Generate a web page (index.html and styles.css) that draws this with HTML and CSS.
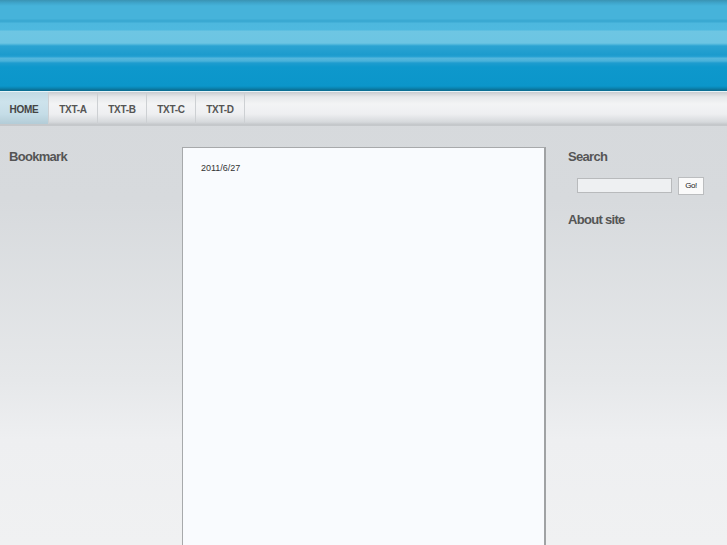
FILE: index.html
```html
<!DOCTYPE html>
<html>
<head>
<meta charset="utf-8">
<link rel="stylesheet" href="styles.css">
</head>
<body>
<div class="header"></div>
<div class="nav">
  <a class="tab active">HOME</a>
  <a class="tab">TXT-A</a>
  <a class="tab">TXT-B</a>
  <a class="tab">TXT-C</a>
  <a class="tab">TXT-D</a>
</div>
<div class="main">
  <div class="left">
    <h2 class="heading">Bookmark</h2>
  </div>
  <div class="content">
    <div class="date">2011/6/27</div>
  </div>
  <div class="right">
    <h2 class="heading">Search</h2>
    <div class="search">
      <input class="search-input" type="text">
      <button class="go">Go!</button>
    </div>
    <h2 class="heading about">About site</h2>
  </div>
</div>
</body>
</html>
```
FILE: styles.css
```css
html, body {
  margin: 0;
  padding: 0;
  height: 100%;
  overflow: hidden;
}
body {
  font-family: "Liberation Sans", Arial, sans-serif;
  background: linear-gradient(to bottom, #d5d8db 0px, #d7dadd 200px, #e6e8ea 380px, #eeeff1 440px, #f0f1f2 545px);
}
.header {
  height: 91px;
  background: linear-gradient(to bottom,
    #3a93b3 0px, #3fa6cc 3px, #46b3da 6px, #46b3da 19px,
    #3aa9d2 20px, #3aa9d2 22px, #4db8de 23px, #4fb9df 30px,
    #6ec6e3 31px, #6cc5e3 43px, #58bcde 44px, #2aa3d2 46px,
    #1c9bcd 55px, #2aa3d4 57px, #55b7dd 58px, #4ab2da 61px,
    #1e9ccf 63px, #0e98cc 67px, #0b96ca 86px, #0a86b4 88px, #0b6f94 90px);
  border-bottom: 1px solid #e8f4f8;
}
.nav {
  display: flex;
  height: 32px;
  background: linear-gradient(to bottom, #c9ccd0 0px, #e6e8ea 5px, #f3f4f5 12px, #eeeff1 22px, #d6d9dc 30px, #c8cbce 32px);
  border-bottom: 2px solid #c5c8cb;
}
.tab {
  display: flex;
  align-items: center;
  justify-content: center;
  width: 49px;
  border-right: 1px solid #cdd0d3;
  font-size: 10px;
  font-weight: bold;
  color: #555;
  letter-spacing: -0.3px;
  padding-top: 3px;
  box-sizing: border-box;
}
.tab.active {
  background: linear-gradient(to bottom, #c2d9e3 0px, #cde3ec 10px, #c5dde7 22px, #b3ccd7 32px);
  color: #444;
}
.main {
  display: flex;
  padding-top: 21px;
}
.left {
  width: 182px;
  padding-left: 9px;
  box-sizing: border-box;
}
.heading {
  margin: 0;
  font-size: 13px;
  font-weight: bold;
  color: #555;
  letter-spacing: -0.7px;
  line-height: 16px;
  padding-top: 2px;
}
.content {
  width: 364px;
  height: 420px;
  background: #f9fbfe;
  border: 1px solid #a7a9ab;
  border-right: 2px solid #a0a2a4;
  padding: 15px 0 0 18px;
  box-sizing: border-box;
}
.date {
  font-size: 9px;
  color: #333;
}
.right {
  padding-left: 22px;
}
.search {
  display: flex;
  align-items: center;
  padding: 12px 0 0 9px;
  gap: 6px;
  height: 17px;
  margin-bottom: 16px;
}
.search-input {
  width: 95px;
  height: 15px;
  box-sizing: border-box;
  border: 1px solid #b8babc;
  background: #eef0f2;
  margin: 0;
  padding: 0;
}
.go {
  width: 26px;
  height: 18px;
  box-sizing: border-box;
  border: 1px solid #bbbdbf;
  background: #fafafa;
  font-family: "Liberation Sans", Arial, sans-serif;
  font-size: 8px;
  color: #222;
  padding: 0;
  margin: 0;
  letter-spacing: -0.4px;
}
```
